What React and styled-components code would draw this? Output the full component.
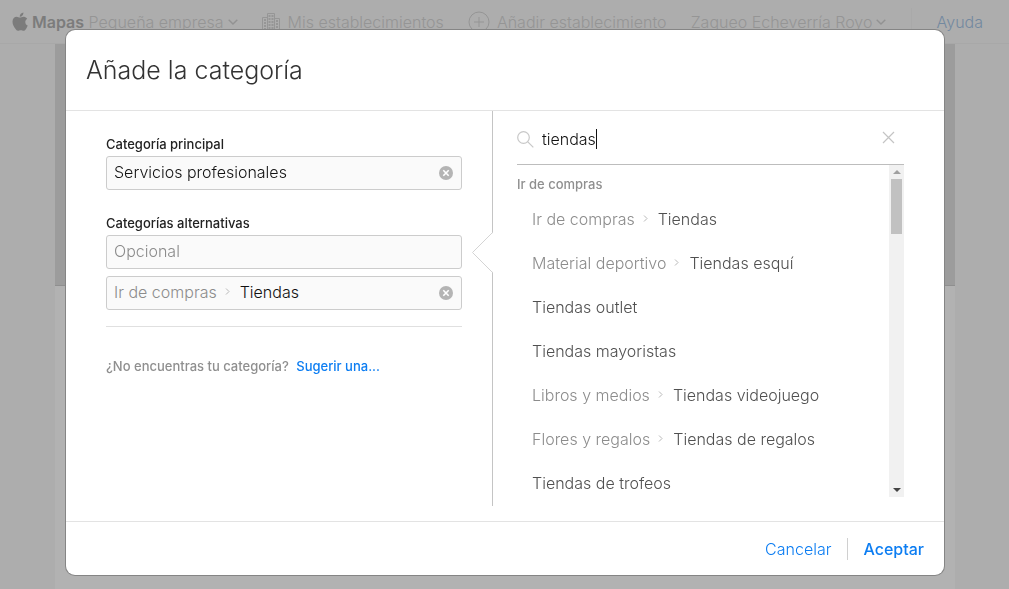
import React, { useState } from 'react'
import styled, { createGlobalStyle } from 'styled-components';

const GlobalStyle = createGlobalStyle`
    * {
        box-sizing: border-box;
    }
    body {
        margin: 0;
        min-height: 100vh;
        overflow: hidden;
        background-color: #adadad;
        font-family: Inter, "Liberation Sans", Arial, sans-serif;
        font-size: 16px;
        font-weight: 300;
        line-height: 20px;
        color: #333;
    }
    button, input {
        font: inherit;
        color: inherit;
        border: none;
        padding: 0;
        background: none;
        outline: none;
    }
    button {
        cursor: pointer;
    }
    a {
        text-decoration: none;
    }
    svg {
        display: block;
        flex: none;
    }
`;

/* page behind the dialog */

const TopBar = styled.header`
    display: flex;
    align-items: center;
    justify-content: space-between;
    height: 44px;
    padding: 0 26px 0 12px;
    border-bottom: 1px solid #a8a8a8;
    color: #959595;
    white-space: nowrap;
`;

const Brand = styled.a`
    display: flex;
    align-items: center;
    gap: 4px;
    color: #959595;
`;

const BrandName = styled.strong`
    font-weight: 600;
    color: #7c7c7c;
`;

const NavLink = styled.a`
    display: flex;
    align-items: center;
    gap: 7px;
    color: #959595;
`;

const AccountButton = styled.button`
    display: flex;
    align-items: center;
    gap: 4px;
`;

const HelpLink = styled.a`
    display: flex;
    align-items: center;
    height: 28px;
    padding-left: 25px;
    border-left: 1px solid #a9a9a9;
    color: #7389a0;
`;

const Column = styled.main`
    width: 100%;
    max-width: 900px;
    min-height: calc(100vh - 44px);
    margin: 0 auto;
    background-color: #b2b2b2;
`;

const Hero = styled.div`
    height: 242px;
    background-color: #9c9c9c;
    border-bottom: 1px solid #8f8f8f;
`;

/* dialog */

const Overlay = styled.div`
    position: fixed;
    inset: 0;
    padding: 30px 65px 0 66px;
    overflow: auto;
`;

const Dialog = styled.section`
    background-color: #fff;
    border-radius: 9px;
    box-shadow: 0 0 0 1px #858585;
`;

const DialogHeader = styled.header`
    display: flex;
    align-items: center;
    height: 81px;
    padding: 0 20px;
    border-bottom: 1px solid #e3e3e3;
`;

const Title = styled.h1`
    margin: 0;
    font-size: 25px;
    line-height: 32px;
    font-weight: 300;
    color: #333;
`;

const DialogBody = styled.div`
    display: grid;
    grid-template-columns: minmax(0, 426fr) minmax(0, 452fr);
    padding-bottom: 15px;
`;

const FormPanel = styled.form`
    padding: 25px 30px 0 40px;
`;

const Group = styled.div`
    display: flex;
    flex-direction: column;
    gap: 7px;
    margin-bottom: ${props => props.$last ? 16 : 25}px;
`;

const Label = styled.label`
    font-size: 13px;
    line-height: 16px;
    font-weight: 500;
    color: #222;
    margin-bottom: -3px;
`;

const Field = styled.div`
    display: flex;
    align-items: center;
    height: 34px;
    padding: 0 8px 2px 7px;
    background-color: #fafafa;
    border: 1px solid #ccc;
    border-radius: 3px;
`;

const FieldInput = styled.input`
    flex: 1;
    min-width: 0;
    color: #111;
    &::placeholder {
        color: #8c8c8c;
        opacity: 1;
    }
`;

const Parent = styled.span`
    color: #8c8c8c;
`;

const Arrow = styled.span`
    display: flex;
    width: 23px;
    padding-left: 8px;
    color: #b8b8b8;
`;

const ClearButton = styled.button`
    display: flex;
    margin-top: 2px;
`;

const Hint = styled.p`
    margin: 0;
    padding-top: 31px;
    border-top: 1px solid #e0e0e0;
    font-size: 13px;
    line-height: 16px;
    font-weight: 500;
    color: #8f8f8f;
`;

const SuggestLink = styled.a`
    margin-left: 4px;
    color: #0c7df2;
`;

const SearchPanel = styled.div`
    position: relative;
    padding: 0 40px 9px 24px;
    border-left: 1px solid #c4c4c4;
`;

const Notch = styled.svg`
    position: absolute;
    top: 121px;
    left: -21px;
`;

const SearchBar = styled.div`
    display: flex;
    align-items: center;
    height: 54px;
    padding: 3px 9px 0 0;
    border-bottom: 1px solid #bdbdbd;
`;

const SearchInput = styled.input`
    field-sizing: content;
    margin-left: 8px;
    color: #111;
    caret-color: transparent;
`;

const Caret = styled.span`
    width: 1px;
    height: 20px;
    background-color: #111;
`;

const CloseButton = styled.button`
    display: flex;
    margin-left: auto;
    padding-bottom: 3px;
`;

const ResultsArea = styled.div`
    display: flex;
    height: 332px;
`;

const Results = styled.div`
    flex: 1;
    overflow: hidden;
`;

const ResultsHeading = styled.h2`
    margin: 0;
    padding: 11px 0 5px;
    font-size: 13px;
    line-height: 16px;
    font-weight: 500;
    color: #8f8f8f;
`;

const ResultList = styled.ul`
    margin: 0;
    padding: 0;
    list-style: none;
`;

const Result = styled.button`
    display: flex;
    align-items: center;
    width: 100%;
    height: 44px;
    padding-left: 15px;
    color: #505050;
    white-space: nowrap;
`;

const ScrollTrack = styled.div`
    display: flex;
    flex-direction: column;
    align-items: center;
    justify-content: space-between;
    width: 15px;
    background-color: #f1f1f1;
`;

const ScrollStart = styled.div`
    display: flex;
    flex-direction: column;
    align-items: center;
`;

const ScrollArrow = styled.div`
    display: flex;
    align-items: center;
    justify-content: center;
    width: 15px;
    height: 14px;
    color: ${props => props.$enabled ? '#444' : '#a0a0a0'};
`;

const ScrollThumb = styled.div`
    width: 11px;
    height: 55px;
    background-color: #c1c1c1;
`;

const DialogFooter = styled.footer`
    display: flex;
    align-items: center;
    justify-content: flex-end;
    height: 54px;
    padding-right: 20px;
    border-top: 1px solid #e3e3e3;
`;

const FooterButton = styled.button`
    color: #0c7df2;
    font-weight: ${props => props.$primary ? 500 : 300};
`;

const Separator = styled.span`
    width: 1px;
    height: 22px;
    margin: 0 15px 0 16px;
    background-color: #d0d0d0;
`;

const results = [
    { parent: 'Ir de compras', name: 'Tiendas' },
    { parent: 'Material deportivo', name: 'Tiendas esquí' },
    { name: 'Tiendas outlet' },
    { name: 'Tiendas mayoristas' },
    { parent: 'Libros y medios', name: 'Tiendas videojuego' },
    { parent: 'Flores y regalos', name: 'Tiendas de regalos' },
    { name: 'Tiendas de trofeos' },
];

const AppleIcon = () => (
    <svg width="16" height="20" viewBox="0 0 16 20" fill="#7c7c7c">
        <path d="M11.4 0.4c0.1 1.2-0.3 2.2-1 3.1-0.7 0.8-1.6 1.3-2.6 1.2-0.1-1.1 0.4-2.1 1-2.9 0.7-0.8 1.7-1.3 2.6-1.4z" />
        <path d="M15.2 6.8c-1.2 0.8-1.9 1.9-1.9 3.3 0 1.6 0.9 2.9 2.4 3.5-0.4 1.2-1 2.3-1.7 3.3-0.7 1-1.4 1.9-2.4 1.9-1.1 0-1.5-0.6-2.8-0.6-1.3 0-1.8 0.6-2.8 0.6-1.1 0-1.9-1-2.6-2C1.9 14.9 0.5 12.3 0.5 9.7c0-3.2 2-5 4.1-5 1.3 0 2.4 0.9 3.2 0.9 0.8 0 2.1-0.9 3.6-0.9 1.1 0 2.7 0.5 3.8 2.1z" />
    </svg>
)

const BuildingsIcon = () => (
    <svg width="19" height="20" viewBox="0 0 19 20" fill="none" stroke="#969696">
        <path d="M0.5 19.5V5.5h5v14zM5.5 19.5v-18h7v18zM12.5 19.5v-13h5v13z" />
        <path d="M3 7v11M7.5 3v15M10.5 3v15M15 8v10" strokeWidth="2" strokeDasharray="2 1" />
    </svg>
)

const PlusIcon = () => (
    <svg width="22" height="22" viewBox="0 0 22 22" fill="none" stroke="#959595">
        <circle cx="11" cy="11" r="10" />
        <path d="M11 6v10M6 11h10" />
    </svg>
)

const ChevronDown = () => (
    <svg width="10" height="6" viewBox="0 0 10 6" fill="none" stroke="#929292" strokeWidth="1.4">
        <path d="M0.7 0.7L5 5l4.3-4.3" />
    </svg>
)

const ChevronRight = () => (
    <svg width="6" height="8" viewBox="0 0 6 8" fill="none" stroke="currentColor">
        <path d="M1 0.5l3 3-3 3" />
    </svg>
)

const ClearIcon = () => (
    <svg width="14" height="14" viewBox="0 0 14 14">
        <circle cx="7" cy="7" r="7" fill="#b4b4b4" />
        <path d="M4.3 4.3l5.4 5.4M9.7 4.3l-5.4 5.4" stroke="#fff" strokeWidth="1.6" />
    </svg>
)

const SearchIcon = () => (
    <svg width="17" height="17" viewBox="0 0 17 17" fill="none" stroke="#c8c8c8" strokeWidth="1.2">
        <circle cx="6.5" cy="6.5" r="5.8" />
        <path d="M10.8 10.8l5.5 5.5" />
    </svg>
)

const CloseIcon = () => (
    <svg width="13" height="13" viewBox="0 0 13 13" stroke="#c4c4c4" strokeWidth="1.2">
        <path d="M1 1l11 11M12 1L1 12" />
    </svg>
)

const Triangle = ({ down }) => (
    <svg width="8" height="4" viewBox="0 0 8 4" fill="currentColor">
        <path d={down ? 'M0 0h8L4 4z' : 'M0 4h8L4 0z'} />
    </svg>
)

const CategoryPath = ({ parent }) => (
    <>
        <Parent>{parent}</Parent>
        <Arrow><ChevronRight /></Arrow>
    </>
)

const Background = () => (
    <>
        <TopBar>
            <Brand href="#">
                <AppleIcon />
                <span><BrandName>Mapas</BrandName> Pequeña empresa</span>
                <ChevronDown />
            </Brand>
            <NavLink href="#"><BuildingsIcon />Mis establecimientos</NavLink>
            <NavLink href="#"><PlusIcon />Añadir establecimiento</NavLink>
            <AccountButton>Zaqueo Echeverría Royo<ChevronDown /></AccountButton>
            <HelpLink href="#">Ayuda</HelpLink>
        </TopBar>
        <Column>
            <Hero />
        </Column>
    </>
)

const App = () => {
    const [main, setMain] = useState('Servicios profesionales');
    const [optional, setOptional] = useState('');
    const [alternative, setAlternative] = useState('Tiendas');
    const [query, setQuery] = useState('tiendas');

    return (
        <>
            <GlobalStyle />
            <Background />
            <Overlay>
                <Dialog role="dialog" aria-labelledby="dialog-title">
                    <DialogHeader>
                        <Title id="dialog-title">Añade la categoría</Title>
                    </DialogHeader>
                    <DialogBody>
                        <FormPanel>
                            <Group>
                                <Label htmlFor="main">Categoría principal</Label>
                                <Field>
                                    <FieldInput id="main" value={main} onChange={e => setMain(e.target.value)} />
                                    <ClearButton type="button" aria-label="Borrar" onClick={() => setMain('')}><ClearIcon /></ClearButton>
                                </Field>
                            </Group>
                            <Group $last>
                                <Label htmlFor="optional">Categorías alternativas</Label>
                                <Field>
                                    <FieldInput id="optional" placeholder="Opcional" value={optional} onChange={e => setOptional(e.target.value)} />
                                </Field>
                                <Field>
                                    <CategoryPath parent="Ir de compras" />
                                    <FieldInput aria-label="Categoría alternativa" value={alternative} onChange={e => setAlternative(e.target.value)} />
                                    <ClearButton type="button" aria-label="Borrar" onClick={() => setAlternative('')}><ClearIcon /></ClearButton>
                                </Field>
                            </Group>
                            <Hint>
                                ¿No encuentras tu categoría? <SuggestLink href="#">Sugerir una...</SuggestLink>
                            </Hint>
                        </FormPanel>
                        <SearchPanel>
                            <Notch width="21" height="41" viewBox="0 0 21 41">
                                <path d="M21 0.5L1 20.5l20 20z" fill="#fff" />
                                <path d="M20.5 0.5l-20 20 20 20" fill="none" stroke="#d4d4d4" />
                            </Notch>
                            <SearchBar>
                                <SearchIcon />
                                <SearchInput aria-label="Buscar categoría" value={query} onChange={e => setQuery(e.target.value)} />
                                <Caret />
                                <CloseButton aria-label="Borrar búsqueda" onClick={() => setQuery('')}><CloseIcon /></CloseButton>
                            </SearchBar>
                            <ResultsArea>
                                <Results>
                                    <ResultsHeading>Ir de compras</ResultsHeading>
                                    <ResultList>
                                        {results.map(item => (
                                            <li key={item.name}>
                                                <Result>
                                                    {item.parent && <CategoryPath parent={item.parent} />}
                                                    {item.name}
                                                </Result>
                                            </li>
                                        ))}
                                    </ResultList>
                                </Results>
                                <ScrollTrack>
                                    <ScrollStart>
                                        <ScrollArrow><Triangle /></ScrollArrow>
                                        <ScrollThumb />
                                    </ScrollStart>
                                    <ScrollArrow $enabled><Triangle down /></ScrollArrow>
                                </ScrollTrack>
                            </ResultsArea>
                        </SearchPanel>
                    </DialogBody>
                    <DialogFooter>
                        <FooterButton>Cancelar</FooterButton>
                        <Separator />
                        <FooterButton $primary>Aceptar</FooterButton>
                    </DialogFooter>
                </Dialog>
            </Overlay>
        </>
    )
}

export default App
